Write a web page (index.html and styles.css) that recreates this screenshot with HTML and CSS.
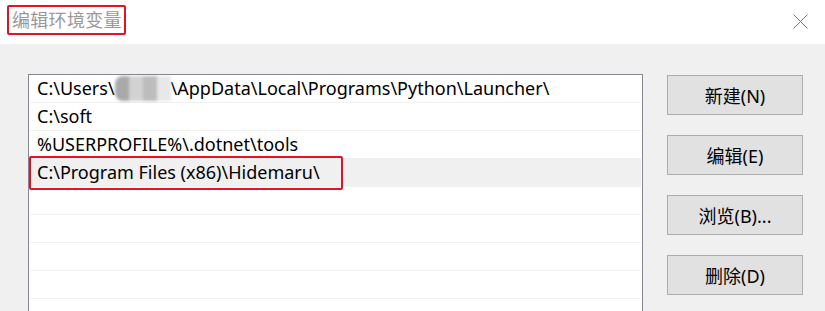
FILE: index.html
```html
<!DOCTYPE html>
<html lang="zh-CN">
<head>
  <meta charset="UTF-8" />
  <title>编辑环境变量</title>
  <link rel="stylesheet" href="styles.css">
</head>
<body>

  <header class="titlebar">
    <h1 class="title">编辑环境变量</h1>
    <button class="close" aria-label="关闭">
      <svg width="15" height="15" viewBox="0 0 15 15">
        <path d="M0.5 0.5 L14.5 14.5 M14.5 0.5 L0.5 14.5" stroke="#777" stroke-width="1" fill="none" />
      </svg>
    </button>
  </header>

  <div class="dialog">
    <div class="path-list">
      <div class="row">C:\Users\<span class="blur"><i></i><i></i><i></i><i></i></span>\AppData\Local\Programs\Python\Launcher\</div>
      <div class="row">C:\soft</div>
      <div class="row">%USERPROFILE%\.dotnet\tools</div>
      <div class="row selected">C:\Program Files (x86)\Hidemaru\<span class="mark"></span></div>
      <div class="row"></div>
      <div class="row"></div>
      <div class="row"></div>
      <div class="row"></div>
    </div>

    <div class="actions">
      <button class="btn">新建(N)</button>
      <button class="btn">编辑(E)</button>
      <button class="btn">浏览(B)...</button>
      <button class="btn">删除(D)</button>
    </div>
  </div>

</body>
</html>
```

FILE: styles.css
```css
* {
  margin: 0;
  padding: 0;
  box-sizing: border-box;
  font-family: 'Noto Sans', 'Noto Sans CJK SC', sans-serif;
}

html, body {
  width: 825px;
  height: 311px;
  overflow: hidden;
}

body {
  background: #f0f0f0;
  color: #000;
}

.titlebar {
  height: 44px;
  background: #fff;
  display: flex;
  align-items: flex-start;
  justify-content: space-between;
  padding: 5px 17px 0 7px;
}

.title {
  font-size: 18px;
  font-weight: 400;
  color: #999;
  line-height: 26px;
  padding: 0 2px 0 3px;
  border: 2px solid #e81123;
  border-radius: 2px;
  letter-spacing: 0.3px;
}

.close {
  background: none;
  border: none;
  margin-top: 9px;
  width: 15px;
  height: 15px;
  display: flex;
}

.dialog {
  display: flex;
  padding: 30px 0 0 28px;
  gap: 24px;
}

.path-list {
  width: 615px;
  height: 237px;
  overflow: hidden;
  background: #fff;
  border: 1px solid #828790;
  border-bottom: none;
  padding: 0 1px;
}

.row {
  position: relative;
  height: 28px;
  border-bottom: 1px solid #f0f0f0;
  padding-left: 7px;
  font-size: 18px;
  line-height: 27px;
  white-space: nowrap;
}

.row.selected {
  background: #f0f0f0;
  border-bottom-color: #f0f0f0;
}

.blur {
  display: inline-flex;
  vertical-align: middle;
  width: 56px;
  height: 25px;
  margin: -4px 0 0 0;
  filter: blur(1.5px);
}

.blur i {
  flex: 1;
  background: #c4c4c4;
}

.blur i:nth-child(1) { background: #a9a9a9; border-radius: 8px 0 0 8px; }
.blur i:nth-child(2) { background: #d2d2d2; }
.blur i:nth-child(3) { background: #bcbcbc; }
.blur i:nth-child(4) { background: #e8e8e8; }

.mark {
  position: absolute;
  left: -1px;
  top: -3px;
  width: 314px;
  height: 34px;
  border: 2px solid #e81123;
  border-radius: 2px;
}

.actions {
  display: flex;
  flex-direction: column;
  gap: 20px;
  padding-top: 1px;
}

.btn {
  width: 136px;
  height: 40px;
  background: #e1e1e1;
  border: 1px solid #adadad;
  font-size: 18px;
  color: #000;
}
```
